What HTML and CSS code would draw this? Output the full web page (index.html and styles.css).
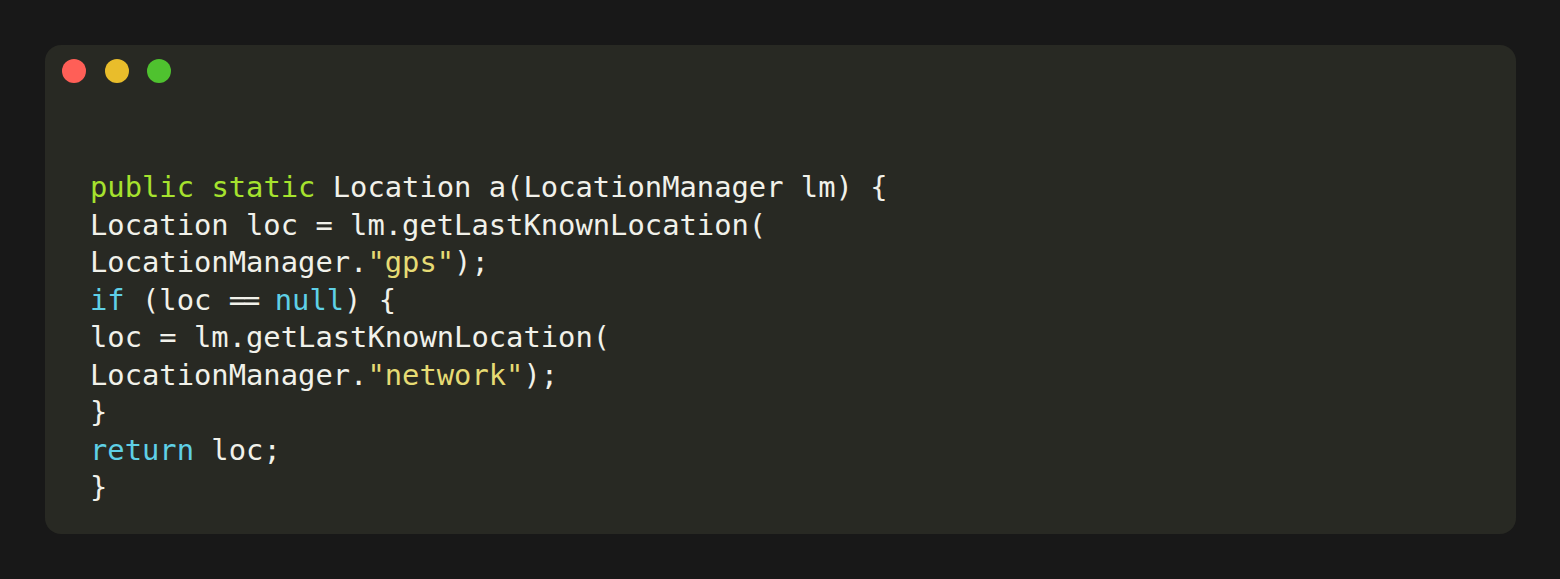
FILE: index.html
```html
<!DOCTYPE html>
<html>
<head>
<meta charset="utf-8">
<link rel="stylesheet" href="styles.css">
</head>
<body>
<div class="card">
  <div class="dots">
    <span class="dot red"></span>
    <span class="dot yellow"></span>
    <span class="dot green"></span>
  </div>
  <div class="code">
    <div class="line"><span class="kw">public</span> <span class="kw">static</span> Location a(LocationManager lm) {</div>
    <div class="line">Location loc = lm.getLastKnownLocation(</div>
    <div class="line">LocationManager.<span class="str">"gps"</span>);</div>
    <div class="line"><span class="kw2">if</span> (loc <span class="eq">==</span> <span class="kw2">null</span>) {</div>
    <div class="line">loc = lm.getLastKnownLocation(</div>
    <div class="line">LocationManager.<span class="str">"network"</span>);</div>
    <div class="line">}</div>
    <div class="line"><span class="kw2">return</span> loc;</div>
    <div class="line">}</div>
  </div>
</div>
</body>
</html>
```
FILE: styles.css
```css
html, body {
  margin: 0;
  padding: 0;
  background: #181818;
}
body {
  padding: 45px 44px 45px 45px;
}
.card {
  background: #282923;
  border-radius: 16px;
  height: 489px;
  box-sizing: border-box;
  padding: 14px 17px 0 17px;
}
.dots {
  display: flex;
  gap: 18.5px;
  height: 24px;
}
.dot {
  width: 24px;
  height: 24px;
  border-radius: 50%;
  display: block;
}
.red { background: #ff5f57; }
.yellow { background: #e9bd2b; }
.green { background: #4fc22f; }
.code {
  margin: 86px 0 0 28px;
  font-family: "DejaVu Sans Mono", monospace;
  font-size: 28.8px;
  line-height: 37.5px;
  color: #f1f1ea;
}
.line {
  white-space: pre;
  height: 37.5px;
}
.kw { color: #a6e22e; }
.kw2 { color: #5fd0e6; }
.str { color: #e6db74; }
.eq { letter-spacing: -3px; }
```
